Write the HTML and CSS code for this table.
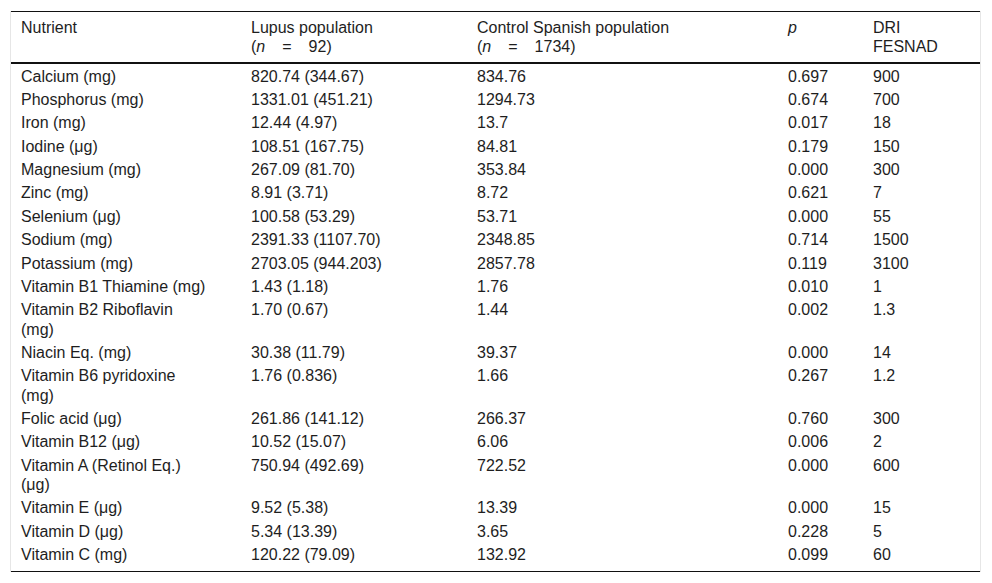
FILE: index.html
```html
<!DOCTYPE html>
<html lang="en">
<head>
<meta charset="utf-8">
<title>Nutrient intake</title>
<link rel="stylesheet" href="styles.css">
</head>
<body>
<div class="table-wrap">
<table class="nutrients">
<thead>
<tr>
<th class="c-name">Nutrient</th>
<th class="c-lupus">Lupus population<span class="n-line">(<i>n</i><span class="eq">=</span>92)</span></th>
<th class="c-control">Control Spanish population<span class="n-line">(<i>n</i><span class="eq">=</span>1734)</span></th>
<th class="c-p"><i>p</i></th>
<th class="c-dri">DRI FESNAD</th>
</tr>
</thead>
<tbody>
<tr><td>Calcium (mg)</td><td>820.74 (344.67)</td><td>834.76</td><td>0.697</td><td>900</td></tr>
<tr><td>Phosphorus (mg)</td><td>1331.01 (451.21)</td><td>1294.73</td><td>0.674</td><td>700</td></tr>
<tr><td>Iron (mg)</td><td>12.44 (4.97)</td><td>13.7</td><td>0.017</td><td>18</td></tr>
<tr><td>Iodine (μg)</td><td>108.51 (167.75)</td><td>84.81</td><td>0.179</td><td>150</td></tr>
<tr><td>Magnesium (mg)</td><td>267.09 (81.70)</td><td>353.84</td><td>0.000</td><td>300</td></tr>
<tr><td>Zinc (mg)</td><td>8.91 (3.71)</td><td>8.72</td><td>0.621</td><td>7</td></tr>
<tr><td>Selenium (μg)</td><td>100.58 (53.29)</td><td>53.71</td><td>0.000</td><td>55</td></tr>
<tr><td>Sodium (mg)</td><td>2391.33 (1107.70)</td><td>2348.85</td><td>0.714</td><td>1500</td></tr>
<tr><td>Potassium (mg)</td><td>2703.05 (944.203)</td><td>2857.78</td><td>0.119</td><td>3100</td></tr>
<tr><td>Vitamin B1 Thiamine (mg)</td><td>1.43 (1.18)</td><td>1.76</td><td>0.010</td><td>1</td></tr>
<tr><td>Vitamin B2 Riboflavin (mg)</td><td>1.70 (0.67)</td><td>1.44</td><td>0.002</td><td>1.3</td></tr>
<tr><td>Niacin Eq. (mg)</td><td>30.38 (11.79)</td><td>39.37</td><td>0.000</td><td>14</td></tr>
<tr><td>Vitamin B6 pyridoxine (mg)</td><td>1.76 (0.836)</td><td>1.66</td><td>0.267</td><td>1.2</td></tr>
<tr><td>Folic acid (μg)</td><td>261.86 (141.12)</td><td>266.37</td><td>0.760</td><td>300</td></tr>
<tr><td>Vitamin B12 (μg)</td><td>10.52 (15.07)</td><td>6.06</td><td>0.006</td><td>2</td></tr>
<tr><td>Vitamin A (Retinol Eq.) (μg)</td><td>750.94 (492.69)</td><td>722.52</td><td>0.000</td><td>600</td></tr>
<tr><td>Vitamin E (μg)</td><td>9.52 (5.38)</td><td>13.39</td><td>0.000</td><td>15</td></tr>
<tr><td>Vitamin D (μg)</td><td>5.34 (13.39)</td><td>3.65</td><td>0.228</td><td>5</td></tr>
<tr><td>Vitamin C (mg)</td><td>120.22 (79.09)</td><td>132.92</td><td>0.099</td><td>60</td></tr>
</tbody>
</table>
</div>
</body>
</html>
```

FILE: styles.css
```css
html, body {
  margin: 0;
  padding: 0;
  background: #ffffff;
}

body {
  font-family: "Liberation Sans", Arial, sans-serif;
  font-size: 16px;
  line-height: 19.2px;
  color: #1e1e1e;
}

.table-wrap {
  margin: 11px 0 0 10px;
  width: 969px;
  border-left: 1px solid #e6e6e6;
  border-right: 1px solid #e6e6e6;
}

.nutrients {
  width: 969px;
  table-layout: fixed;
  border-collapse: separate;
  border-spacing: 0;
}

.nutrients th,
.nutrients td {
  box-sizing: border-box;
  text-align: left;
  vertical-align: top;
  font-weight: normal;
  padding: 2.1px 12px 2.1px 11px;
}

.nutrients th {
  padding-top: 6px;
  padding-bottom: 6px;
  border-top: 1px solid #111111;
  border-bottom: 2px solid #111111;
}

.nutrients th:first-child,
.nutrients td:first-child {
  padding-left: 10px;
  padding-right: 32px;
}

.nutrients tbody tr:last-child td {
  padding-bottom: 7px;
  border-bottom: 1px solid #111111;
}

.c-name { width: 229px; }
.c-lupus { width: 226px; }
.c-control { width: 311px; }
.c-p { width: 85px; }
.c-dri { width: 118px; }

.n-line {
  display: block;
}

.eq {
  margin: 0 17px 0 17px;
}
```
